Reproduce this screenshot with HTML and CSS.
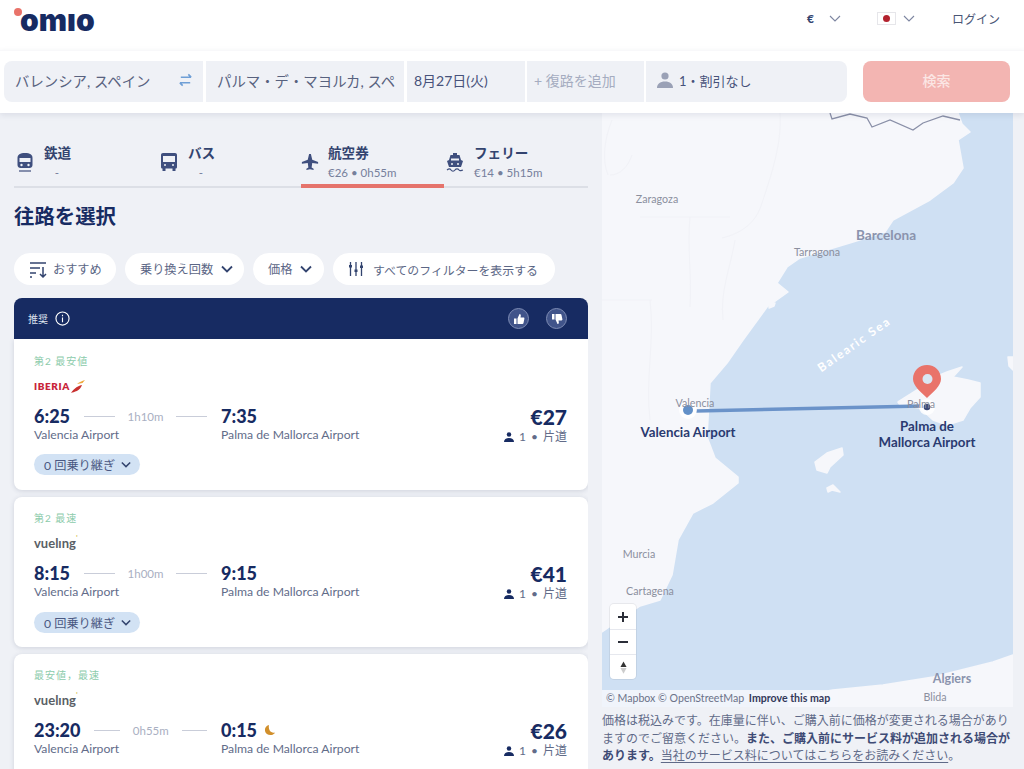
FILE: index.html
```html
<!DOCTYPE html>
<html lang="ja">
<head>
<meta charset="utf-8">
<title>Omio</title>
<link rel="stylesheet" href="styles.css">
</head>
<body>
<header class="top">
  <div class="logo"><span class="logo-dot"></span>omıo</div>
  <div class="top-right">
    <span class="cur">€</span>
    <svg class="chev-thin cur-chev" viewBox="0 0 12 7"><path d="M1 1l5 5 5-5"/></svg>
    <span class="flag"><i></i></span>
    <svg class="chev-thin flag-chev" viewBox="0 0 12 7"><path d="M1 1l5 5 5-5"/></svg>
    <span class="login">ログイン</span>
  </div>
</header>
<section class="search">
  <div class="field f1"><span>バレンシア, スペイン</span>
    <svg class="swap" viewBox="0 0 16 14"><path d="M3 4h11M11 1l3 3M13 10H2M5 13l-3-3"/></svg>
  </div>
  <div class="field f2"><span>パルマ・デ・マヨルカ, スペ</span></div>
  <div class="field f3"><span>8月27日(火)</span></div>
  <div class="field f4"><span class="muted">+ 復路を追加</span></div>
  <div class="field f5">
    <svg class="pax-big" viewBox="0 0 16 16"><circle cx="8" cy="4" r="3.6"/><path d="M0 16c0-4 3-6.500 8-6.500s8 2.500 8 6.500z"/></svg>
    <span>1・割引なし</span></div>
  <button class="go">検索</button>
</section>
<main class="layout">
  <div class="results">
    <nav class="tabs">
      <div class="tab">
        <svg class="tab-ic" viewBox="0 0 18 20"><path d="M9 1C4 1 1.500 2.500 1.500 6v7c0 2 1.500 3 3 3h9c1.500 0 3-1 3-3V6c0-3.500-2.500-5-7.500-5z"/><path class="cut" d="M3.500 6h11v4h-11z"/><circle class="cut" cx="5.500" cy="13" r="1.200"/><circle class="cut" cx="12.500" cy="13" r="1.200"/><path class="ln" d="M3 19h12"/></svg>
        <div class="tab-t"><b>鉄道</b><small>-</small></div>
      </div>
      <div class="tab">
        <svg class="tab-ic" viewBox="0 0 18 20"><path d="M3 1h12c1.200 0 2 .8 2 2v12c0 1-.7 1.500-1.500 1.500V19h-3v-2.500h-7V19h-3v-2.500C1.700 16.500 1 16 1 15V3c0-1.200.8-2 2-2z"/><path class="cut" d="M3 4h12v6H3z"/><circle class="cut" cx="5" cy="13" r="1"/><circle class="cut" cx="13" cy="13" r="1"/></svg>
        <div class="tab-t"><b>バス</b><small>-</small></div>
      </div>
      <div class="tab on">
        <svg class="tab-ic" viewBox="0 0 20 20"><path d="M9 1h2l1.500 6.500L19 10v2l-6.500-1-.7 5 2.200 1.600V19L10 18l-4 1v-1.400L8.200 16l-.7-5L1 12v-2l6.500-2.500z"/></svg>
        <div class="tab-t"><b>航空券</b><small>€26 • 0h55m</small></div>
      </div>
      <div class="tab">
        <svg class="tab-ic" viewBox="0 0 18 20"><path d="M7 1h4v2h2.500L15 8l2 1-2 6H3L1 9l2-1 1.500-5H7z"/><path class="cut" d="M5 6.500h8v2H5z"/><circle class="cut" cx="6" cy="12" r="1"/><circle class="cut" cx="12" cy="12" r="1"/><path class="ln" d="M1 18c2-1.500 3-1.500 4 0s3 1.500 4 0 3-1.500 4 0 2 .5 4 0"/></svg>
        <div class="tab-t"><b>フェリー</b><small>€14 • 5h15m</small></div>
      </div>
    </nav>
    <h1 class="title">往路を選択</h1>
    <div class="chips">
      <div class="chip c1">
        <svg class="ic-sort" viewBox="0 0 18 17"><path d="M1 2h16M1 7h10M1 12h6M1 16h2M14 6v10M11 13l3 3 3-3"/></svg>おすすめ
      </div>
      <div class="chip c2">乗り換え回数<svg class="chev" viewBox="0 0 12 8"><path d="M1 1.500l5 5 5-5"/></svg></div>
      <div class="chip c3">価格<svg class="chev" viewBox="0 0 12 8"><path d="M1 1.500l5 5 5-5"/></svg></div>
      <div class="chip c4">
        <svg class="ic-filter" viewBox="0 0 16 16"><path d="M2.500 1v14M8 1v14M13.500 1v14"/><path class="knob" d="M1 4h3v2.500H1zM6.500 8.500h3V11h-3zM12 4.500h3V7h-3z"/></svg>すべてのフィルターを表示する
      </div>
    </div>
    <div class="reco">
      <span class="reco-l">推奨</span>
      <svg class="ic-info" viewBox="0 0 16 16"><circle cx="8" cy="8" r="7"/><path d="M8 7v5M8 4v1.500"/></svg>
      <span class="thumb first"><svg viewBox="0 0 12 12"><path d="M1 5.500h2.500V11H1zM4.500 5.500L6.500 1c1 0 1.500.8 1.300 1.800L7.500 4.500H10.500c.7 0 1 .6.900 1.200L10.500 10c-.1.600-.5 1-1.100 1h-4.900z"/></svg></span>
      <span class="thumb"><svg viewBox="0 0 12 12"><path d="M1 1h2.500v5.500H1zM4.500 6.500L6.500 11c1 0 1.500-.8 1.300-1.800L7.500 7.500H10.500c.7 0 1-.6.900-1.200L10.500 2c-.1-.6-.5-1-1.100-1h-4.900z"/></svg></span>
    </div>

    <article class="card first-card">
      <div class="tag">第2 最安値</div>
      <div class="brand iberia">IBERIA<svg viewBox="0 0 16 14"><path class="ib-r" d="M1 14c3-1 9-2 11-8-3 .5-8 3-11 8z"/><path class="ib-y" d="M7 5c2-2 5-3 8-4-1 1-1.500 2-2.500 3z"/></svg></div>
      <div class="row">
        <div class="leg">
          <div class="times"><b>6:25</b><i></i><span>1h10m</span><i></i></div>
          <p>Valencia Airport</p>
        </div>
        <div class="leg arr">
          <div class="times"><b>7:35</b></div>
          <p>Palma de Mallorca Airport</p>
        </div>
        <div class="price">
          <b>€27</b>
          <span><svg class="pax" viewBox="0 0 12 12"><circle cx="6" cy="3" r="2.700"/><path d="M0 12c0-3 2.500-4.800 6-4.800s6 1.800 6 4.800z"/></svg>1 • 片道</span>
        </div>
      </div>
      <div class="stops">0 回乗り継ぎ<svg class="chev" viewBox="0 0 12 8"><path d="M1 1.500l5 5 5-5"/></svg></div>
    </article>

    <article class="card">
      <div class="tag">第2 最速</div>
      <div class="brand vueling">vuelıng<em>'</em></div>
      <div class="row">
        <div class="leg">
          <div class="times"><b>8:15</b><i></i><span>1h00m</span><i></i></div>
          <p>Valencia Airport</p>
        </div>
        <div class="leg arr">
          <div class="times"><b>9:15</b></div>
          <p>Palma de Mallorca Airport</p>
        </div>
        <div class="price">
          <b>€41</b>
          <span><svg class="pax" viewBox="0 0 12 12"><circle cx="6" cy="3" r="2.700"/><path d="M0 12c0-3 2.500-4.800 6-4.800s6 1.800 6 4.800z"/></svg>1 • 片道</span>
        </div>
      </div>
      <div class="stops">0 回乗り継ぎ<svg class="chev" viewBox="0 0 12 8"><path d="M1 1.500l5 5 5-5"/></svg></div>
    </article>

    <article class="card">
      <div class="tag">最安値，最速</div>
      <div class="brand vueling">vuelıng<em>'</em></div>
      <div class="row">
        <div class="leg">
          <div class="times"><b>23:20</b><i></i><span>0h55m</span><i></i></div>
          <p>Valencia Airport</p>
        </div>
        <div class="leg arr">
          <div class="times"><b>0:15</b><svg class="moon" viewBox="0 0 12 12"><path d="M5 1c-3 .8-4.500 3-4 6 .6 3 3.500 4.500 6.500 4 1.500-.3 3-1.200 3.500-2.500-4 1-7-2.500-6-7.500z"/></svg></div>
          <p>Palma de Mallorca Airport</p>
        </div>
        <div class="price">
          <b>€26</b>
          <span><svg class="pax" viewBox="0 0 12 12"><circle cx="6" cy="3" r="2.700"/><path d="M0 12c0-3 2.500-4.800 6-4.800s6 1.800 6 4.800z"/></svg>1 • 片道</span>
        </div>
      </div>
    </article>
  </div>

  <aside class="side">
    <div class="map">
      <svg class="map-art" viewBox="602 113 411 594">
        <path class="land" d="M602 113H958L962 124 970 132 958 140 963 168 953 183 930 200 893 220 885 232 853 242 800 258 787 267 777 283 788 292 767 307 743 340 727 363 710 383 707 437 715 458 738 477 738 483 713 503 693 513 678 540 672 575 660 600 640 606 602 632z"/>
        <path class="land" d="M1013 655L993 662 933 677 883 685 833 690 793 697 788 707H1013z"/>
        <path class="land" d="M898 402L917 390 935 377 947 372 962 367 953 377 968 380 980 383 980 397 970 408 963 420 947 425 933 420 920 408 900 405z"/>
        <path class="land" d="M815 462L827 453 842 448 843 455 830 467 827 473 817 470z"/>
        <path class="land" d="M827 488L833 485 840 492 832 490 828 492z"/>
        <path class="land" d="M1008 357H1013V370L1009 366z"/>
        <path class="land" d="M770 305l5-2-1 3-5 2z"/>
        <path class="prov" d="M612 120c-8 20-10 40-4 55M610 175c10 0 18-8 22-20M780 113c2 30-8 60-18 90-6 20-20 30-40 35M640 217h90M690 217c-3 30 2 60 0 90M735 240c-5 30-15 50-12 80M602 300h50M650 300c5 40-5 80 0 120"/>
        <path class="border" d="M830 113L832 119 850 114 867 118 872 127 890 120 913 130 923 123 943 116 960 120"/>
        <path class="route" d="M696 411L921 406"/>
        <circle class="halo" cx="688" cy="410" r="9"/>
        <circle class="dot-a" cx="688" cy="410" r="5"/>
        <circle class="halo" cx="927" cy="407" r="8"/>
        <circle class="dot-b" cx="927" cy="407" r="3.300"/>
        <path class="pin" d="M927 365c-8 0-14 6-14 14 0 7 8 13 14 19 6-6 14-12 14-19 0-8-6-14-14-14z"/>
        <circle class="pin-hole" cx="927.500" cy="379" r="5"/>
      </svg>
      <span class="lb small zaragoza">Zaragoza</span>
      <span class="lb small tarragona">Tarragona</span>
      <span class="lb city barcelona">Barcelona</span>
      <span class="lb sea">Balearic Sea</span>
      <span class="lb small valencia">Valencia</span>
      <span class="lb small palma">Palma</span>
      <span class="lb air air-v">Valencia Airport</span>
      <span class="lb air air-p">Palma de<br>Mallorca Airport</span>
      <span class="lb small murcia">Murcia</span>
      <span class="lb small cartagena">Cartagena</span>
      <span class="lb city algiers">Algiers</span>
      <span class="lb small blida">Blida</span>
      <div class="attrib">© Mapbox © OpenStreetMap <b>Improve this map</b></div>
      <div class="zoom">
        <div class="zb"><svg viewBox="0 0 10 10"><path d="M5 0v10M0 5h10"/></svg></div>
        <div class="zb"><svg viewBox="0 0 10 10"><path d="M0 5h10"/></svg></div>
        <div class="zb"><svg class="compass" viewBox="0 0 8 14"><path class="cn" d="M4 0l3.500 6.500h-7z"/><path class="cs" d="M4 14L.5 7.500h7z"/></svg></div>
      </div>
    </div>
    <p class="note">価格は税込みです。在庫量に伴い、ご購入前に価格が変更される場合がありますのでご留意ください。<b>また、ご購入前にサービス料が追加される場合があります。</b><u>当社のサービス料についてはこちらをお読みください</u>。</p>
  </aside>
</main>
</body>
</html>
```
FILE: styles.css
```css
* { box-sizing: border-box; }
html, body { margin: 0; height: 769px; overflow: hidden; }
body {
  background: #eff1f6;
  color: #172b62;
  font-family: Lato, "Noto Sans CJK JP", sans-serif;
}
svg { display: block; flex: none; }

/* header */
.top {
  height: 50px;
  background: #fff;
  display: flex;
  align-items: center;
  justify-content: space-between;
  padding: 0 24px 0 20px;
}
.logo {
  position: relative;
  font: 900 30px/1 Inter, sans-serif;
  color: #172b62;
  letter-spacing: 0;
  margin-top: -10px;
}
.logo-dot {
  position: absolute;
  left: -6px;
  top: 3px;
  width: 8px;
  height: 8px;
  border-radius: 50%;
  background: #e9736a;
}
.top-right { display: flex; align-items: center; margin-top: -13px; }
.cur { font-size: 12px; font-weight: 900; color: #33446f; }
.chev-thin { width: 12px; height: 7px; fill: none; stroke: #7d86a1; stroke-width: 1.100; }
.cur-chev { margin-left: 15px; }
.flag {
  width: 19px;
  height: 13px;
  margin-left: 36px;
  background: #fff;
  border: 1px solid #e6e6ea;
  display: flex;
  align-items: center;
  justify-content: center;
}
.flag i { width: 7px; height: 7px; border-radius: 50%; background: #b3222e; }
.flag-chev { margin-left: 7px; }
.login { margin-left: 37px; font-size: 12px; color: #4a5675; }

/* search */
.search {
  position: relative;
  z-index: 2;
  height: 63px;
  background: #fff;
  border-top: 1px solid #f8f8fa;
  box-shadow: 0 2px 6px rgba(40, 50, 90, .10);
  display: flex;
  align-items: center;
  padding: 0 14px 2px 4px;
  font-size: 14.400px;
  color: #58627f;
}
.field {
  height: 41px;
  padding-bottom: 2px;
  background: #eff1f6;
  display: flex;
  align-items: center;
  white-space: nowrap;
  overflow: hidden;
  margin-right: 3px;
}
.f1 { width: 199px; padding: 0 10px 2px 11px; border-radius: 8px 0 0 8px; justify-content: space-between; }
.f2 { width: 198px; padding: 0 11px 2px; }
.f3 { width: 118px; padding: 0 7px 2px; margin-right: 2px; color: #47527a; font-size: 14px; }
.f4 { width: 117px; padding: 0 7px 2px; margin-right: 2px; }
.f5 { width: 201px; padding: 0 11px 2px; border-radius: 0 8px 8px 0; margin-right: 16px; color: #47527a; font-size: 13px; }
.muted { color: #a5acc0; font-size: 14px; }
.swap { width: 15px; height: 14px; fill: none; stroke: #6f9fd6; stroke-width: 1.700; }
.pax-big { width: 16px; height: 16px; fill: #9aa1b6; margin-right: 6px; }
.go {
  width: 147px;
  height: 41px;
  padding: 0 0 2px;
  border: 0;
  border-radius: 8px;
  background: #f3b5b2;
  color: #fbe6e4;
  font: 500 14px Lato, "Noto Sans CJK JP", sans-serif;
}

/* layout */
.layout {
  display: grid;
  grid-template-columns: 602px 411px;
  height: 656px;
}
.results { padding-left: 14px; width: 588px; overflow: hidden; padding-bottom: 6px; margin-bottom: -6px; }

/* tabs */
.tabs {
  display: grid;
  grid-template-columns: 144px 143px 143px 144px;
  width: 574px;
  height: 75px;
  border-bottom: 2px solid #dcdfe6;
}
.tab {
  display: flex;
  align-items: center;
  height: 75px;
  padding: 29px 0 4px 2px;
  gap: 10px;
}
.tab.on { border-bottom: 4px solid #e5736b; padding: 29px 0 0 0; gap: 9px; }
.tab-ic { width: 18px; height: 20px; fill: #3f4f7e; margin-top: -2px; }
.cut { fill: #eff1f6; }
.ln { fill: none; stroke: #3f4f7e; stroke-width: 1.200; }
.tab-t { display: flex; flex-direction: column; align-items: flex-start; }
.tab-t b { font-size: 13.600px; font-weight: 700; line-height: 17px; color: #33446f; }
.tab-t small { font-size: 11.500px; line-height: 16px; color: #76809c; margin-top: 3px; }
.tab:nth-child(-n+2) small { width: 26px; text-align: center; }

.title { margin: 15px 0 0; height: 27px; font-size: 20.400px; line-height: 27px; font-weight: 700; color: #172b62; }

/* chips */
.chips { display: flex; gap: 9px; margin-top: 23px; }
.chip {
  height: 32px;
  background: #fff;
  border-radius: 17px;
  display: flex;
  align-items: center;
  font-size: 12.200px;
  color: #5b6685;
  white-space: nowrap;
}
.c1 { width: 102px; padding-left: 15px; }
.c2 { width: 119px; padding-left: 15px; }
.c3 { width: 71px; padding-left: 15px; }
.c4 { width: 222px; padding-left: 15px; font-size: 11.900px; }
.ic-sort { width: 18px; height: 17px; margin-right: 6px; fill: none; stroke: #33446f; stroke-width: 1.500; }
.ic-filter { width: 16px; height: 16px; margin-right: 9px; fill: none; stroke: #33446f; stroke-width: 1.300; }
.knob { fill: #33446f; stroke: none; }
.chev { width: 12px; height: 8px; margin-left: 8px; fill: none; stroke: #33446f; stroke-width: 1.800; }

/* recommendation */
.reco {
  height: 41px;
  margin-top: 13px;
  background: #172b62;
  border-radius: 8px 8px 0 0;
  display: flex;
  align-items: center;
  padding: 0 21px 0 14px;
  color: #dfe3ee;
  font-size: 10px;
}
.ic-info { width: 15px; height: 15px; margin-left: 7px; fill: none; stroke: #fff; stroke-width: 1.200; }
.thumb {
  width: 21px;
  height: 21px;
  border-radius: 50%;
  background: #41548a;
  border: 1px solid #7e8cb4;
  margin-left: 17px;
  display: flex;
  align-items: center;
  justify-content: center;
}
.thumb.first { margin-left: auto; }
.thumb svg { width: 12px; height: 12px; fill: #fff; }

/* cards */
.card {
  height: 150px;
  margin-top: 7px;
  padding: 14px 21px 0 20px;
  background: #fff;
  border-radius: 8px;
  box-shadow: 0 1px 5px rgba(40, 50, 90, .16);
}
.first-card { height: 151px; margin-top: 0; padding-top: 15px; border-radius: 0 0 8px 8px; }
.tag { font-size: 10px; line-height: 15px; color: #8ccbab; letter-spacing: 1px; }
.brand { height: 22px; margin-top: 6px; display: flex; align-items: center; }
.iberia { font: 800 10px Lato, sans-serif; color: #c8243a; letter-spacing: .6px; }
.iberia svg { width: 16px; height: 14px; }
.ib-r { fill: #c8302f; }
.ib-y { fill: #eda73a; }
.vueling { font: 700 13px Lato, sans-serif; color: #5a5f66; }
.vueling em { font-size: 8px; color: #d9c76a; margin-bottom: 10px; font-style: normal; }
.row { display: flex; margin-top: 9px; height: 38px; }
.leg { width: 187px; padding-right: 14px; }
.leg.arr { width: auto; padding-right: 0; }
.times { display: flex; align-items: center; height: 20px; }
.times b { font-size: 18px; font-weight: 900; line-height: 20px; color: #172b62; margin-right: 14px; }
.times i { flex: 1; height: 1px; background: #c9cdd9; }
.times span { margin: 0 13px; font-size: 11.500px; color: #a9afc2; }
.moon { width: 12px; height: 12px; fill: #d18f2b; margin-left: -7px; }
.leg p { margin: 1px 0 0; font-size: 12.200px; line-height: 15px; color: #626c89; white-space: nowrap; }
.price { margin-left: auto; display: flex; flex-direction: column; align-items: flex-end; margin-top: -1px; }
.price b { font-size: 21px; font-weight: 900; line-height: 24px; color: #172b62; }
.price span { display: flex; align-items: center; font-size: 12px; line-height: 15px; color: #626c89; word-spacing: 2px; }
.pax { width: 10px; height: 10px; fill: #172b62; margin-right: 5px; }
.stops {
  display: inline-flex;
  align-items: center;
  height: 21px;
  margin-top: 11px;
  padding: 0 9px 0 10px;
  background: #d2e2f4;
  border-radius: 11px;
  font-size: 12.200px;
  color: #4a5882;
  white-space: nowrap;
}
.first-card .stops { margin-top: 10px; }
.stops .chev { width: 10px; height: 7px; margin-left: 6px; }

/* map */
.side { display: flex; flex-direction: column; }
.map { position: relative; height: 594px; overflow: hidden; background: #cfe0f3; }
.map-art { position: absolute; inset: 0; width: 411px; height: 594px; }
.land { fill: #f6f7fb; stroke: #f6f7fb; stroke-width: 1.500; stroke-linejoin: round; }
.prov { fill: none; stroke: #f1f2f7; stroke-width: 1; }
.border { fill: none; stroke: #8a90a8; stroke-width: 1.300; }
.route { stroke: #6b93c9; stroke-width: 3.500; }
.halo { fill: #fff; opacity: .85; }
.dot-a { fill: #6290c8; }
.dot-b { fill: #3c4a78; }
.pin { fill: #e9736a; }
.pin-hole { fill: #d9e6f3; }
.lb { position: absolute; transform: translate(-50%, -50%); white-space: nowrap; }
.small { font-size: 10.700px; color: #8b8f9e; }
.city { font-size: 13.600px; font-weight: 700; color: #8a93ad; }
.air { font-size: 13.300px; line-height: 16px; font-weight: 700; color: #2a3a70; text-align: center; }
.zaragoza { left: 55px; top: 85px; }
.tarragona { left: 215px; top: 138px; }
.barcelona { left: 284px; top: 122px; }
.sea { left: 252px; top: 231px; font-size: 12px; font-weight: 700; letter-spacing: 1.800px; color: #fff; transform: translate(-50%, -50%) rotate(-35deg); }
.valencia { left: 93px; top: 289px; }
.palma { left: 319px; top: 290px; }
.air-v { left: 86px; top: 319px; }
.air-p { left: 325px; top: 321px; }
.murcia { left: 37px; top: 440px; }
.cartagena { left: 48px; top: 477px; }
.algiers { left: 350px; top: 565px; font-size: 12.500px; }
.blida { left: 333px; top: 583px; }
.attrib {
  position: absolute;
  left: 0;
  bottom: 0;
  height: 17px;
  padding: 0 8px 0 4px;
  font-size: 10.600px;
  line-height: 17px;
  color: #6b7289;
  background: rgba(246, 247, 251, .85);
}
.attrib b { color: #33395a; margin-left: 2px; }
.zoom {
  position: absolute;
  left: 8px;
  top: 491px;
  width: 26px;
  background: #fff;
  border-radius: 4px;
  box-shadow: 0 0 0 1px rgba(0, 0, 0, .06);
}
.zb { height: 25px; display: flex; align-items: center; justify-content: center; border-top: 1px solid #e6e8ee; }
.zb:first-child { border-top: 0; }
.zb svg { width: 10px; height: 10px; fill: none; stroke: #2b2e38; stroke-width: 2; }
.zb .compass { width: 7px; height: 13px; stroke: none; }
.cn { fill: #333; }
.cs { fill: #ccc; }
.note {
  margin: 5px 0 0;
  width: 411px;
  font-size: 12px;
  line-height: 17.500px;
  color: #5f6a88;
  word-break: break-all;
}
.note b { color: #3e4b75; }
.note u { text-underline-offset: 2px; }
```
